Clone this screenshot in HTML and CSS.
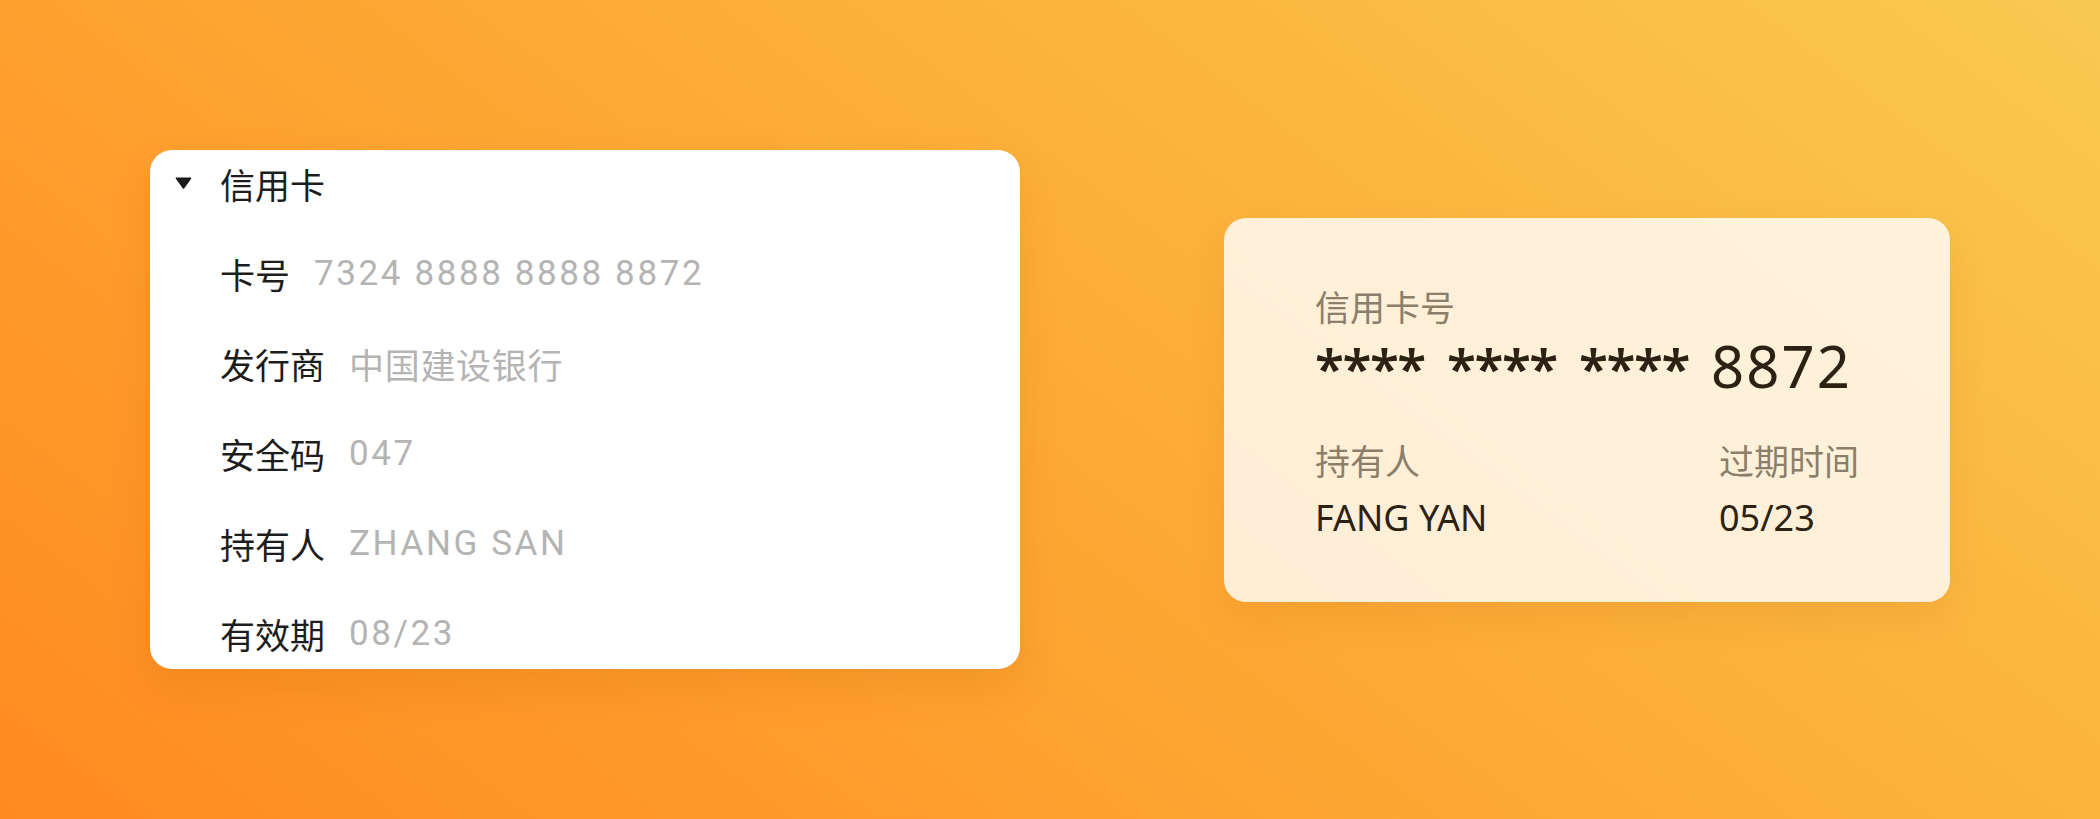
FILE: index.html
```html
<!DOCTYPE html>
<html lang="zh-CN">
<head>
    <meta charset="UTF-8">
    <meta name="viewport" content="width=device-width, initial-scale=1.0">
    <title>信用卡</title>
    <link rel="stylesheet" href="styles.css">
</head>
<body>
    <!-- 详情列表 -->
    <section class="detail-panel">
        <div class="detail-header">
            <svg class="caret" width="17" height="12" viewBox="0 0 17 12">
                <path d="M1.5 1.2 H15.5 L8.5 11 Z" fill="#1c1c1c" stroke="#1c1c1c" stroke-width="1.6" stroke-linejoin="round"/>
            </svg>
            <span>信用卡</span>
        </div>
        <div class="detail-row">
            <span class="detail-label">卡号</span>
            <span class="detail-value">7324 8888 8888 8872</span>
        </div>
        <div class="detail-row">
            <span class="detail-label">发行商</span>
            <span class="detail-value cjk">中国建设银行</span>
        </div>
        <div class="detail-row">
            <span class="detail-label">安全码</span>
            <span class="detail-value">047</span>
        </div>
        <div class="detail-row">
            <span class="detail-label">持有人</span>
            <span class="detail-value">ZHANG SAN</span>
        </div>
        <div class="detail-row">
            <span class="detail-label">有效期</span>
            <span class="detail-value">08/23</span>
        </div>
    </section>

    <!-- 卡片预览 -->
    <section class="card-preview">
        <div class="card-label">信用卡号</div>
        <div class="card-number"><span class="mask">**** **** **** </span><span class="last-four">8872</span></div>
        <div class="card-meta">
            <div>
                <div class="card-label">持有人</div>
                <div class="card-value">FANG YAN</div>
            </div>
            <div>
                <div class="card-label">过期时间</div>
                <div class="card-value">05/23</div>
            </div>
        </div>
    </section>
</body>
</html>
```

FILE: styles.css
```css
/* Basis */
html, body {
    height: 100%;
}

body {
    margin: 0;
    padding: 0 150px;
    display: flex;
    align-items: center;
    justify-content: space-between;
    background: linear-gradient(37deg, #ff8a20 0%, #fda733 45%, #f9c94f 100%);
    font-family: "Noto Sans CJK SC", sans-serif;
}

/* Detail lijst */
.detail-panel {
    width: 870px;
    height: 519px;
    box-sizing: border-box;
    padding: 0 0 3px;
    background: #fff;
    border-radius: 22px;
    box-shadow: 0 18px 40px rgba(170, 80, 0, 0.14);
    display: flex;
    flex-direction: column;
    gap: 24px;
    overflow: hidden;
}

.detail-header {
    display: flex;
    align-items: center;
    gap: 28px;
    padding-left: 25px;
    height: 66px;
    font-size: 35px;
    color: #1d1d1d;
}

.caret {
    display: block;
}

.detail-row {
    display: flex;
    align-items: center;
    gap: 24px;
    padding-left: 70px;
    height: 66px;
    font-size: 35px;
}

.detail-label {
    color: #1d1d1d;
}

.detail-value {
    font-family: Roboto, "Noto Sans CJK SC", sans-serif;
    color: #b4b4b4;
    letter-spacing: 2.6px;
}

.detail-value.cjk {
    letter-spacing: 0.7px;
}

/* Kaart */
.card-preview {
    width: 726px;
    height: 384px;
    box-sizing: border-box;
    padding: 64px 91px 0;
    background: rgba(255, 255, 255, 0.8);
    border-radius: 22px;
    box-shadow: 0 16px 36px rgba(170, 80, 0, 0.12);
    font-family: "Noto Sans", "Noto Sans CJK SC", sans-serif;
}

.card-label {
    font-family: "Noto Sans CJK SC", sans-serif;
    font-size: 35px;
    line-height: 48px;
    color: #8b7f6c;
}

.card-number {
    margin-top: 6px;
    height: 60px;
    line-height: 60px;
    color: #2b2213;
    white-space: nowrap;
}

.mask {
    font-size: 53px;
    font-weight: 600;
    letter-spacing: -1.5px;
    word-spacing: 10px;
}

.last-four {
    font-size: 58px;
    letter-spacing: 2px;
}

.card-meta {
    margin-top: 40px;
    display: flex;
    justify-content: space-between;
}

.card-value {
    margin-top: 10px;
    font-size: 36px;
    line-height: 48px;
    color: #2b2213;
}
```
